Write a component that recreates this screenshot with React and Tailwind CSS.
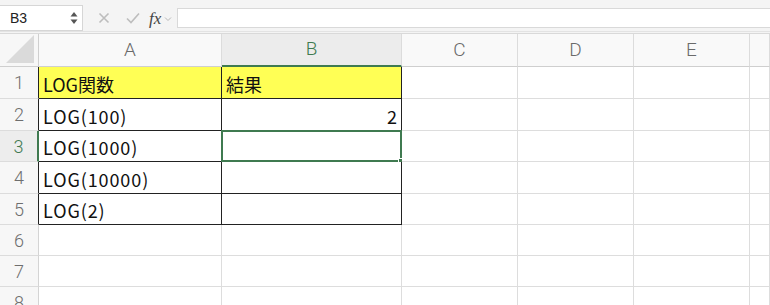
import React from 'react';

const FONT = { fontFamily: '"Noto Sans CJK JP", "Noto Sans", sans-serif' };

const COLS = ['A', 'B', 'C', 'D', 'E', ''];
const ROW_H = ['h-[32px]', 'h-[32px]', 'h-[31px]', 'h-[32px]', 'h-[31px]', 'h-[31px]', 'h-[31px]', 'h-[31px]'];

const data = {
  1: ['LOG関数', '結果'],
  2: ['LOG(100)', '2'],
  3: ['LOG(1000)', ''],
  4: ['LOG(10000)', ''],
  5: ['LOG(2)', ''],
};

const Toolbar = () => (
  <div className="h-[34px] bg-[#f4f4f4] border-b border-[#d9d9d9] flex items-start pt-[5px] relative">
    <div className="w-[83px] h-[26px] bg-white border-y border-r border-[#d6d6d6] flex items-center justify-between pl-[10px] pr-[4px]">
      <span className="text-[14px] text-[#222]" style={{ fontFamily: '"Liberation Sans", sans-serif' }}>B3</span>
      <svg width="8" height="16" viewBox="0 0 8 16">
        <path d="M4 2 L7.5 6.5 H0.5 Z" fill="#555" />
        <path d="M4 14 L7.5 9.5 H0.5 Z" fill="#555" />
      </svg>
    </div>
    <div className="w-[94px] h-[26px] flex items-center">
      <svg width="12" height="12" viewBox="0 0 12 12" className="ml-[15px]">
        <path d="M1.5 1.5 L10.5 10.5 M10.5 1.5 L1.5 10.5" stroke="#bdbdbd" strokeWidth="1.6" />
      </svg>
      <svg width="14" height="12" viewBox="0 0 14 12" className="ml-[16px]">
        <path d="M1 6.5 L5 10.5 L13 1.5" stroke="#bdbdbd" strokeWidth="1.6" fill="none" />
      </svg>
      <span className="ml-[9px] text-[17px] italic text-[#444] leading-none" style={{ fontFamily: '"Liberation Serif", serif' }}>fx</span>
      <svg width="8" height="6" viewBox="0 0 8 6" className="ml-[3px] mt-[2px]">
        <path d="M1 1.5 L4 4.5 L7 1.5" stroke="#b8b8b8" strokeWidth="1" fill="none" />
      </svg>
    </div>
    <div className="flex-1 h-[20px] mt-[3px] bg-white border-y border-l border-[#d9d9d9]" />
    <div className="absolute left-0 right-0 bottom-[1px] h-px bg-[#e3e3e3]" />
  </div>
);

const HeaderRow = () => (
  <div className="flex h-[33px]">
    <div className="w-[39px] shrink-0 bg-[#f7f7f7] border-r border-b border-[#cfcfcf] flex items-end justify-end pr-[4px] pb-[3px]">
      <svg width="28" height="28" viewBox="0 0 28 28">
        <path d="M28 0 L28 28 L0 28 Z" fill="#dadada" />
      </svg>
    </div>
    {COLS.map((c, i) => {
      const w = ['w-[183px]', 'w-[180px]', 'w-[116px]', 'w-[116px]', 'w-[116px]', 'flex-1'][i];
      const sel = c === 'B';
      return (
        <div
          key={i}
          className={`${w} shrink-0 flex items-center justify-center border-r border-[#dcdcdc] ${sel ? 'bg-[#ececec] border-b-2 border-b-[#3f7a50] text-[#3f7a50]' : 'bg-[#f9f9f9] border-b border-b-[#cfcfcf] text-[#6a6a6a]'}`}
        >
          <span className="text-[19px] font-light" style={{ fontFamily: 'Roboto, "Liberation Sans", sans-serif' }}>{c}</span>
        </div>
      );
    })}
  </div>
);

const Row = ({ n }) => {
  const inTable = n <= 5;
  const rowSel = n === 3;
  const vals = data[n] || [];
  return (
    <div className={`flex ${ROW_H[n - 1]}`}>
      <div
        className={`w-[39px] shrink-0 flex items-center justify-center text-[18px] border-b border-[#dcdcdc] ${rowSel ? 'bg-[#ededed] text-[#3f7a50] border-r-2 border-r-[#3f7a50]' : 'bg-[#f7f7f7] text-[#6e6e6e] border-r'} ${!rowSel && inTable ? 'border-r-[#222]' : ''} ${!rowSel && !inTable ? 'border-r-[#d4d4d4]' : ''}`}
        style={{ fontFamily: 'Roboto, "Liberation Sans", sans-serif', fontWeight: 300 }}
      >
        {n}
      </div>
      {COLS.map((c, i) => {
        const w = ['w-[183px]', 'w-[180px]', 'w-[116px]', 'w-[116px]', 'w-[116px]', 'flex-1'][i];
        const table = inTable && i < 2;
        const yellow = n === 1 && i < 2;
        const v = vals[i];
        const right = n === 2 && i === 1;
        const selCell = n === 3 && i === 1;
        const latin = v && v.startsWith('LOG(');
        return (
          <div
            key={i}
            className={`${w} shrink-0 relative flex items-center border-r border-b ${table ? 'border-[#222]' : 'border-[#dddddd]'} ${yellow ? 'bg-[#ffff55]' : 'bg-white'} ${right ? 'justify-end pr-[4px]' : 'pl-[4px]'}`}
          >
            {v && (
              <span className={`text-[18px] text-[#111] leading-none pt-[2px] ${latin ? 'tracking-[0.9px]' : ''}`} style={FONT}>
                {v}
              </span>
            )}
            {selCell && (
              <>
                <div className="absolute -left-[1px] -top-[1px] -right-[1px] -bottom-[1px] border-2 border-[#3f7a50]" />
                <div className="absolute -right-[4px] -bottom-[4px] w-[7px] h-[7px] bg-[#3f7a50] border border-white" />
              </>
            )}
          </div>
        );
      })}
    </div>
  );
};

export default function App() {
  return (
    <div className="w-[770px] h-[305px] overflow-hidden bg-white select-none">
      <Toolbar />
      <HeaderRow />
      {[1, 2, 3, 4, 5, 6, 7, 8].map(n => <Row key={n} n={n} />)}
    </div>
  );
}
